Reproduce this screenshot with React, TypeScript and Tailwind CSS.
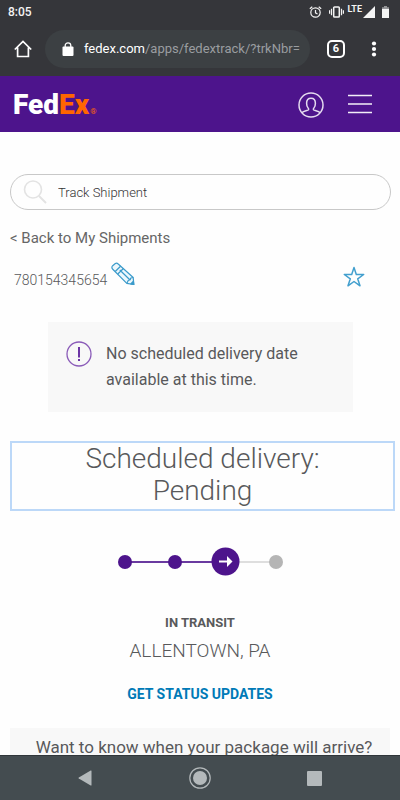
import React from "react";

function StatusBar() {
  return (
    <div className="flex h-6 items-center justify-between pr-2.5 pl-2 text-[#f4f4f4]">
      <span className="text-xs font-medium">8:05</span>
      <div className="flex items-center">
        <svg width="13" height="12" viewBox="0 0 13 12" fill="none" stroke="currentColor" strokeWidth="1.2" aria-label="Alarm">
          <circle cx="6.5" cy="6.5" r="4.7" />
          <path d="M6.500 4v2.800l2 1.200M.8 2.800 3.300.7M12.200 2.800 9.700.7" />
        </svg>
        <svg className="ml-[7px]" width="15" height="12" viewBox="0 0 15 12" fill="none" stroke="currentColor" aria-label="Vibrate">
          <rect x="4.700" y="1" width="5.600" height="10" rx=".8" strokeWidth="1.500" />
          <path d="M2.500 2.800v6.400M.6 4.200v3.600M12.500 2.800v6.400M14.400 4.200v3.600" strokeWidth="1.200" />
        </svg>
        <span className="ml-[3px] pb-1.5 text-[9px] leading-3 font-bold">LTE</span>
        <svg className="ml-px" width="12" height="12" viewBox="0 0 12 12" fill="currentColor" aria-label="Signal">
          <path d="M12 0v12H0z" />
        </svg>
        <svg className="ml-1.5" width="9" height="12" viewBox="0 0 9 12" fill="currentColor" aria-label="Battery">
          <path d="M3 0h3v1.200H3zM1 1.200h7V3H1z" opacity=".5" />
          <path d="M1 3h7v9H1z" />
        </svg>
      </div>
    </div>
  );
}

function BrowserBar() {
  return (
    <div className="flex h-[52px] items-start pt-1.5 pl-3 text-white">
      <button aria-label="Home" className="flex h-[38px] w-[22px] items-center justify-center">
        <svg width="18" height="18" viewBox="0 0 18 18" fill="none" stroke="currentColor" strokeWidth="1.700">
          <path d="M.8 9.500 9 1.400l8.200 8.100M3.600 7.500v9h10.800v-9" />
        </svg>
      </button>
      <div className="ml-[11px] flex h-[38px] min-w-0 flex-1 items-center rounded-full bg-[#3c4043] pl-[17px]">
        <svg className="shrink-0" width="12" height="14" viewBox="0 0 12 14" aria-label="Secure">
          <rect x=".5" y="4.500" width="11" height="9.500" rx="1" fill="currentColor" />
          <path d="M3.200 5.500V3.600a2.800 2.800 0 0 1 5.600 0v1.900" fill="none" stroke="currentColor" strokeWidth="1.300" />
        </svg>
        <button className="ml-2.5 text-left text-[13px] leading-5 whitespace-nowrap text-[#9a9da0]">
          <span className="text-white">fedex.com</span>/apps/fedextrack/?trkNbr=
        </button>
      </div>
      <button aria-label="Tabs" className="ml-[17px] flex h-[38px] items-center">
        <span className="flex size-[18px] items-center justify-center rounded-[5px] border-2 border-white text-[11px] leading-3 font-bold">6</span>
      </button>
      <button aria-label="More options" className="mr-[23px] ml-[26px] flex h-[38px] items-center">
        <svg width="6" height="18" viewBox="0 0 6 18" fill="currentColor">
          <circle cx="3" cy="3.500" r="2.100" />
          <circle cx="3" cy="9" r="2.100" />
          <circle cx="3" cy="14.500" r="2.100" />
        </svg>
      </button>
    </div>
  );
}

function SiteHeader() {
  return (
    <header className="flex h-14 shrink-0 items-center bg-[#4d148c] pr-7 pl-[13px]">
      <a href="#home" aria-label="FedEx home" className="flex items-baseline pt-0.5 text-white">
        <span className="text-[28px] leading-8 font-black">Fed<span className="text-[#ff6600]">Ex</span></span>
        <span className="ml-px text-[8px] leading-3 text-[#ff6600]">®</span>
      </a>
      <button aria-label="Account" className="ml-auto pt-0.5 text-[#e4daef]">
        <svg width="26" height="26" viewBox="0 0 26 26" fill="none" stroke="currentColor" strokeWidth="1.500">
          <circle cx="13" cy="13" r="12" />
          <path d="M3.800 20.800c1.200-1.500 3.800-2 6.100-2.700.9-.3 1-1.300.2-2.100-1-1.200-1.500-2.800-1.500-4.800C8.600 8.200 10.400 6.200 13 6.200s4.400 2 4.400 5c0 2-.5 3.600-1.500 4.800-.8.8-.7 1.800.2 2.100 2.300.7 4.900 1.200 6.100 2.700" />
        </svg>
      </button>
      <button aria-label="Menu" className="ml-6 text-[#f3eef8]">
        <svg width="24" height="20" viewBox="0 0 24 20" stroke="currentColor" strokeWidth="1.500">
          <path d="M0 1.500h24M0 10h24M0 18.500h24" />
        </svg>
      </button>
    </header>
  );
}

function Progress() {
  return (
    <svg className="mx-auto mt-9 block" width="166" height="30" viewBox="0 0 166 30" role="img" aria-label="Step 3 of 4">
      <path d="M8 15h100" stroke="#6a3aa0" strokeWidth="2" />
      <path d="M108 15h50" stroke="#dedede" strokeWidth="2" />
      <circle cx="8" cy="15" r="7" fill="#4d148c" />
      <circle cx="58" cy="15" r="7" fill="#4d148c" />
      <circle cx="108.500" cy="14.500" r="14" fill="#4d148c" />
      <circle cx="159" cy="15" r="7" fill="#b5b5b5" />
      <path d="M102 14.500h9" stroke="#fff" strokeWidth="2" />
      <path d="M110 9 115.500 14.500l-5.500 5.500z" fill="#fff" />
    </svg>
  );
}

function SystemNav() {
  return (
    <nav aria-label="System" className="grid h-[45px] shrink-0 grid-cols-[1fr_30px_1fr] items-center border-t border-[#30363a] bg-[#444c50] text-[#b4b9bb]">
      <button aria-label="Back" className="mr-[93px] justify-self-end">
        <svg width="14" height="16" viewBox="0 0 14 16" fill="currentColor">
          <path d="M13.500 1v14q0 .8-.8.4L.8 8.600q-.8-.6 0-1.200L12.700.6q.8-.4.8.4z" />
        </svg>
      </button>
      <button aria-label="Home screen" className="justify-self-center">
        <svg width="22" height="22" viewBox="0 0 22 22" fill="currentColor">
          <circle cx="11" cy="11" r="10.200" fill="none" stroke="currentColor" strokeWidth="1.200" />
          <circle cx="11" cy="11" r="7" />
        </svg>
      </button>
      <button aria-label="Recent apps" className="ml-[92px] justify-self-start">
        <svg width="15" height="15" viewBox="0 0 15 15" fill="currentColor">
          <rect width="15" height="15" rx="1" />
        </svg>
      </button>
    </nav>
  );
}

export default function App() {
  return (
    <div className="flex h-screen flex-col bg-[#fefefe] font-['Roboto','Liberation_Sans',sans-serif] text-[#58595b]">
      <div className="shrink-0 bg-[#35363a]">
        <StatusBar />
        <BrowserBar />
      </div>
      <SiteHeader />
      <main className="min-h-0 flex-1 overflow-hidden px-2.5">
        <form className="mt-[42px] -mr-px flex h-9 items-center rounded-full border border-[#c8c8c8] pl-3">
          <label htmlFor="track" aria-label="Track shipment" className="shrink-0">
            <svg width="24" height="24" viewBox="0 0 24 24" fill="none" stroke="#e3e3e3" strokeWidth="1.600" aria-hidden="true">
              <circle cx="10" cy="9.500" r="8.500" />
              <path d="m16 16 7 7" strokeWidth="2" />
            </svg>
          </label>
          <input id="track" placeholder="Track Shipment" className="ml-[11px] h-8 min-w-0 flex-1 bg-transparent text-[13px] leading-5 font-light outline-none placeholder:text-[#333333]" />
        </form>
        <a href="#shipments" className="mt-[18px] block text-[15px] leading-5 text-[#666666]">&lt; Back to My Shipments</a>
        <div className="mt-3 flex h-[30px] items-end pr-[25px] pl-1">
          <span className="text-sm leading-5 font-light">780154345654</span>
          <button aria-label="Edit nickname" className="ml-1 self-start">
            <svg width="26" height="26" viewBox="0 0 26 26" fill="none" stroke="#3b9bcb" strokeWidth="1.200" strokeLinejoin="round">
              <path d="M1.500 9q-1.300-1.800.2-3.300l2.300-2q1.700-1.200 3.200.3L22.200 17.500l.6 7-7-1.200z" fill="#edf7fc" />
              <path d="M4.200 11.500 9.800 6M6.800 14l5.600-5.500M8.800 10l10 9.800M15.900 23.200l1.300-2.700 2-.7.600-1.800 2.400-.5" />
              <path d="m19.800 24 2.600-2.800.4 3.300z" fill="#3b9bcb" />
            </svg>
          </button>
          <button aria-label="Add to watch list" className="ml-auto pb-0.5">
            <svg width="22" height="22" viewBox="0 0 22 22" fill="none" stroke="#429fce" strokeWidth="1.500" strokeLinejoin="round">
              <path d="m11 1.500 2.300 7h7.400l-6 4.300 2.300 7-6-4.300-6 4.300 2.300-7-6-4.300h7.400z" />
            </svg>
          </button>
        </div>
        <section className="mt-8 mr-[37px] ml-[38px] flex items-start bg-[#f8f8f8] py-[19px] pl-[18px]">
          <svg className="shrink-0" width="26" height="26" viewBox="0 0 26 26" fill="none" stroke="#8a5bb8" strokeWidth="1.300" aria-hidden="true">
            <circle cx="13" cy="13" r="12" />
            <path d="M13 6v10.500M13 18v2" stroke="#6c35a5" strokeWidth="2" />
          </svg>
          <p className="ml-3.5 text-base leading-[26px]">No scheduled delivery date<br />available at this time.</p>
        </section>
        <h1 className="mt-[29px] -mr-[5px] border-2 border-[#bcd8f8] pb-0.5 text-center text-[28px] leading-8 font-light">
          Scheduled delivery:<br />Pending
        </h1>
        <Progress />
        <div className="text-center">
          <h2 className="mt-9 text-[13px] leading-5 font-bold">IN TRANSIT</h2>
          <p className="mt-1.5 text-[19px] leading-6 font-light">ALLENTOWN, PA</p>
          <button className="mt-[21px] block w-full text-sm leading-5 font-bold text-[#007ab7]">GET STATUS UPDATES</button>
        </div>
        <section className="mt-6 bg-[#f8f8f8] pt-2 text-center text-[17px] leading-[22px]">
          <p className="pl-2 whitespace-nowrap">Want to know when your package will arrive?</p>
        </section>
      </main>
      <SystemNav />
    </div>
  );
}
